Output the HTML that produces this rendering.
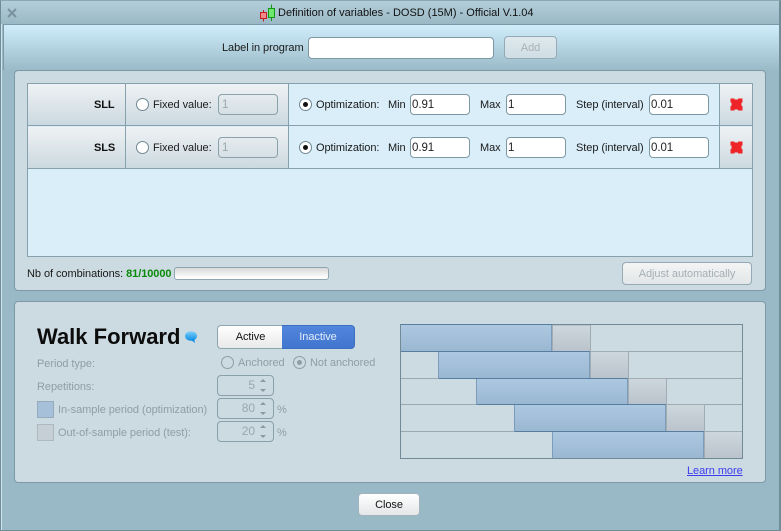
<!DOCTYPE html>
<html><head><meta charset="utf-8"><style>
html,body{margin:0;padding:0;width:781px;height:531px;overflow:hidden;background:#9ab9c6}
*{box-sizing:border-box}
body{font:11px/13px "Liberation Sans",sans-serif;color:#1a1a1a;position:relative;letter-spacing:-.06px}
.a,.t,.i,.b{position:absolute}
.t{white-space:nowrap;height:13px;margin-top:1px}
.g{color:#8f9ea6}
.i{background:#fff;border:1px solid #7d97a3;border-radius:4px;height:22px;padding:3px 1px;font:11.5px/14px "Liberation Sans",sans-serif;color:#222}
.i.d{background:transparent;color:#9aa8af;border-color:#8aa0ab}
.b{border:1px solid #95aab5;border-radius:4px;background:linear-gradient(#fff,#e4e6e8);text-align:center}
.h{background:linear-gradient(#eff2f4,#cbd9e0)}
.r{position:absolute;width:13px;height:13px;border-radius:50%;border:1px solid #6f8792;background:#fff}
.r.on:after{content:"";position:absolute;left:3px;top:3px;width:5px;height:5px;border-radius:50%;background:#111}
.r.d{background:transparent;border-color:#8f9ea6}
.r.d:after{background:#8f9ea6}
.up,.dn{position:absolute;width:0;height:0;border-left:3px solid transparent;border-right:3px solid transparent}
.up{border-bottom:3px solid #8a9aa2}.dn{border-top:3px solid #8a9aa2}
</style></head><body>
<!-- window frame -->
<div class="a" style="left:1px;top:1px;width:778px;height:23px;background:linear-gradient(#b2ced9,#9ab8c5)"></div>
<div class="a" style="left:3px;top:24px;width:776px;height:1px;background:#7c98a5"></div>
<div class="a" style="left:3px;top:24px;width:1px;height:46px;background:#7c98a5"></div>
<div class="a" style="left:1px;top:24px;width:1px;height:506px;background:#d2e4eb"></div>
<div class="a" style="left:4px;top:25px;width:775px;height:46px;background:linear-gradient(#cfedfa,#9ab9c6)"></div>
<div class="a" style="left:0;top:0;width:781px;height:531px;border:1px solid #6f8c99;border-top-color:#8aa7b4;border-right-width:2px"></div>
<svg class="a" style="left:7px;top:8px" width="10" height="10"><path d="M1 1L9 9M9 1L1 9" stroke="#7b929e" stroke-width="2"/></svg>
<svg class="a" style="left:259px;top:4px" width="18" height="18">
<path d="M4.500 6V17.500" stroke="#c02020"/><rect x="1.500" y="8.500" width="6" height="6" fill="#f58a8a" stroke="#c02020"/>
<path d="M12.500 .5V17" stroke="#119911"/><rect x="9.500" y="4.500" width="6" height="9" fill="#6fe66f" stroke="#119911"/>
</svg>
<div class="t" style="left:278px;top:6px;font-size:11px;color:#111;letter-spacing:0">Definition of variables - DOSD (15M) - Official V.1.04</div>
<div class="t" style="left:222px;top:41px">Label in program</div>
<div class="i" style="left:308px;top:37px;width:186px"></div>
<div class="b" style="left:504px;top:36px;width:53px;height:23px;line-height:23px;color:#a8b0b5;background:linear-gradient(#dfe9ee,#cfdde4)">Add</div>

<!-- panel 1 -->
<div class="a" style="left:14px;top:70px;width:752px;height:221px;background:#ccdae1;border:1px solid #7e98a4;border-radius:4px"></div>
<div class="a" style="left:27px;top:83px;width:726px;height:174px;background:#d9eef9;border:1px solid #86a0ac"></div>
<div class="a h" style="left:28px;top:84px;width:97px;height:41px"></div>
<div class="a h" style="left:126px;top:84px;width:162px;height:41px"></div>
<div class="a h" style="left:720px;top:84px;width:32px;height:41px"></div>
<div class="a h" style="left:28px;top:127px;width:97px;height:41px"></div>
<div class="a h" style="left:126px;top:127px;width:162px;height:41px"></div>
<div class="a h" style="left:720px;top:127px;width:32px;height:41px"></div>
<div class="a" style="left:28px;top:125px;width:724px;height:1px;background:#86a0ac"></div>
<div class="a" style="left:28px;top:168px;width:724px;height:1px;background:#86a0ac"></div>
<div class="a" style="left:125px;top:84px;width:1px;height:84px;background:#86a0ac"></div>
<div class="a" style="left:288px;top:84px;width:1px;height:84px;background:#86a0ac"></div>
<div class="a" style="left:719px;top:84px;width:1px;height:84px;background:#86a0ac"></div>

<div class="t" style="left:94px;top:98px;font-weight:bold;color:#111">SLL</div>
<div class="r" style="left:136px;top:98px"></div>
<div class="t" style="left:153px;top:98px">Fixed value:</div>
<div class="i d" style="left:218px;top:94px;width:60px;height:21px;padding:3px 3px">1</div>
<div class="r on" style="left:299px;top:98px"></div>
<div class="t" style="left:316px;top:98px">Optimization:</div>
<div class="t" style="left:388px;top:98px">Min</div>
<div class="i" style="left:410px;top:94px;width:60px;height:21px">0.91</div>
<div class="t" style="left:480px;top:98px">Max</div>
<div class="i" style="left:506px;top:94px;width:60px;height:21px">1</div>
<div class="t" style="left:576px;top:98px">Step (interval)</div>
<div class="i" style="left:649px;top:94px;width:60px;height:21px">0.01</div>
<svg class="a" style="left:730px;top:98px" width="13" height="13"><path d="M.5 .5H4.500V1.500H8V.5H12.500V4.500H11.500V8H12.500V12.500H8V11.500H4.500V12.500H.5V8H1.500V4.500H.5Z" fill="#ee2428"/></svg>

<div class="t" style="left:94px;top:141px;font-weight:bold;color:#111">SLS</div>
<div class="r" style="left:136px;top:141px"></div>
<div class="t" style="left:153px;top:141px">Fixed value:</div>
<div class="i d" style="left:218px;top:137px;width:60px;height:21px;padding:3px 3px">1</div>
<div class="r on" style="left:299px;top:141px"></div>
<div class="t" style="left:316px;top:141px">Optimization:</div>
<div class="t" style="left:388px;top:141px">Min</div>
<div class="i" style="left:410px;top:137px;width:60px;height:21px">0.91</div>
<div class="t" style="left:480px;top:141px">Max</div>
<div class="i" style="left:506px;top:137px;width:60px;height:21px">1</div>
<div class="t" style="left:576px;top:141px">Step (interval)</div>
<div class="i" style="left:649px;top:137px;width:60px;height:21px">0.01</div>
<svg class="a" style="left:730px;top:141px" width="13" height="13"><path d="M.5 .5H4.500V1.500H8V.5H12.500V4.500H11.500V8H12.500V12.500H8V11.500H4.500V12.500H.5V8H1.500V4.500H.5Z" fill="#ee2428"/></svg>

<div class="t" style="left:27px;top:267px">Nb of combinations: <b style="color:#0a8a0a">81/10000</b></div>
<div class="a" style="left:174px;top:267px;width:155px;height:13px;border:1px solid #8fa6b1;border-radius:3px;background:linear-gradient(#d8d8d8,#fff 90%)"></div>
<div class="b" style="left:622px;top:262px;width:130px;height:23px;line-height:23px;color:#a4afb5;background:linear-gradient(#f4f4f4,#e2e6e8)">Adjust automatically</div>

<!-- panel 2 -->
<div class="a" style="left:14px;top:301px;width:752px;height:182px;background:#ccdae1;border:1px solid #7e98a4;border-radius:4px"></div>
<div class="t" style="left:37px;top:323px;font-size:22px;line-height:25px;height:25px;font-weight:bold;color:#0c0c0c;letter-spacing:0">Walk Forward</div>
<svg class="a" style="left:184px;top:330px" width="14" height="14"><defs><linearGradient id="q" x1="0" y1="0" x2="0" y2="1"><stop offset="0" stop-color="#7fd0fa"/><stop offset="1" stop-color="#0e8ee6"/></linearGradient></defs><ellipse cx="7" cy="6" rx="6" ry="4.800" fill="url(#q)"/><path d="M7 10L11 13L10 8Z" fill="#0e8ee6"/></svg>
<div class="a" style="left:217px;top:325px;width:66px;height:24px;border:1px solid #8fa6b1;border-right:0;border-radius:4px 0 0 4px;background:linear-gradient(#fff,#e8e9ea);text-align:center;line-height:22px;color:#111">Active</div>
<div class="a" style="left:282px;top:325px;width:73px;height:24px;border:1px solid #3f6fc0;border-left:0;border-radius:0 4px 4px 0;background:linear-gradient(#5286dc,#4176d0);text-align:center;line-height:22px;color:#e4edf9">Inactive</div>

<div class="t g" style="left:37px;top:357px">Period type:</div>
<div class="r d" style="left:221px;top:356px;background:transparent"></div>
<div class="t g" style="left:238px;top:356px">Anchored</div>
<div class="r d on" style="left:293px;top:356px"></div>
<div class="t g" style="left:310px;top:356px">Not anchored</div>

<div class="t g" style="left:37px;top:380px">Repetitions:</div>
<div class="i d" style="left:217px;top:375px;width:57px;height:21px;padding:2px 18px 2px 0;text-align:right;font-size:12px">5</div>
<div class="up" style="left:260px;top:379px"></div><div class="dn" style="left:260px;top:389px"></div>

<div class="a" style="left:37px;top:401px;width:17px;height:17px;background:#a7c0d9;border:1px solid #96abbb"></div>
<div class="t g" style="left:58px;top:403px">In-sample period (optimization)</div>
<div class="i d" style="left:217px;top:398px;width:57px;height:21px;padding:2px 18px 2px 0;text-align:right;font-size:12px">80</div>
<div class="up" style="left:260px;top:402px"></div><div class="dn" style="left:260px;top:412px"></div>
<div class="t g" style="left:277px;top:403px">%</div>

<div class="a" style="left:37px;top:424px;width:17px;height:17px;background:#c6cfd5;border:1px solid #adb9bf"></div>
<div class="t g" style="left:58px;top:426px">Out-of-sample period (test):</div>
<div class="i d" style="left:217px;top:421px;width:57px;height:21px;padding:2px 18px 2px 0;text-align:right;font-size:12px">20</div>
<div class="up" style="left:260px;top:425px"></div><div class="dn" style="left:260px;top:435px"></div>
<div class="t g" style="left:277px;top:426px">%</div>

<!-- chart -->
<svg class="a" style="left:400px;top:324px" width="344" height="136" shape-rendering="crispEdges">
<defs>
<linearGradient id="bl" x1="0" y1="0" x2="0" y2="1"><stop offset="0" stop-color="#adc8e1"/><stop offset="1" stop-color="#9ab7d2"/></linearGradient>
<linearGradient id="gr" x1="0" y1="0" x2="0" y2="1"><stop offset="0" stop-color="#cdd7dd"/><stop offset="1" stop-color="#bac3cb"/></linearGradient>
</defs>
<g fill="none" stroke="#98a9b0"><path d="M1 27.500H343M1 54.500H343M1 80.500H343M1 107.500H343"/></g>
<g stroke="#a2adb3" fill="url(#gr)">
<rect x="152.500" y="1" width="38" height="26.500"/>
<rect x="190.500" y="27.500" width="38" height="27"/>
<rect x="228.500" y="54.500" width="38" height="26"/>
<rect x="266.500" y="80.500" width="38" height="27"/>
<rect x="304.500" y="107.500" width="38" height="27"/>
</g>
<g fill="url(#bl)" stroke="#7b9cba">
<rect x=".5" y=".5" width="151" height="27"/>
<rect x="38.500" y="27.500" width="151" height="27"/>
<rect x="76.500" y="54.500" width="151" height="26"/>
<rect x="114.500" y="80.500" width="151" height="27"/>
<rect x="152.500" y="107.500" width="151" height="27"/>
</g>
<rect x=".5" y=".5" width="342" height="134" fill="none" stroke="#718a95"/>
<g stroke="#587d9f"><path d="M1 .5H152M1 27.500H190M39 54.500H228M77 80.500H266M115 107.500H304"/></g>
</svg>
<div class="t" style="left:687px;top:464px;color:#3c3cf0;text-decoration:underline">Learn more</div>

<div class="b" style="left:358px;top:493px;width:62px;height:23px;line-height:23px;color:#111;border-color:#a2b4bd">Close</div>
</body></html>
